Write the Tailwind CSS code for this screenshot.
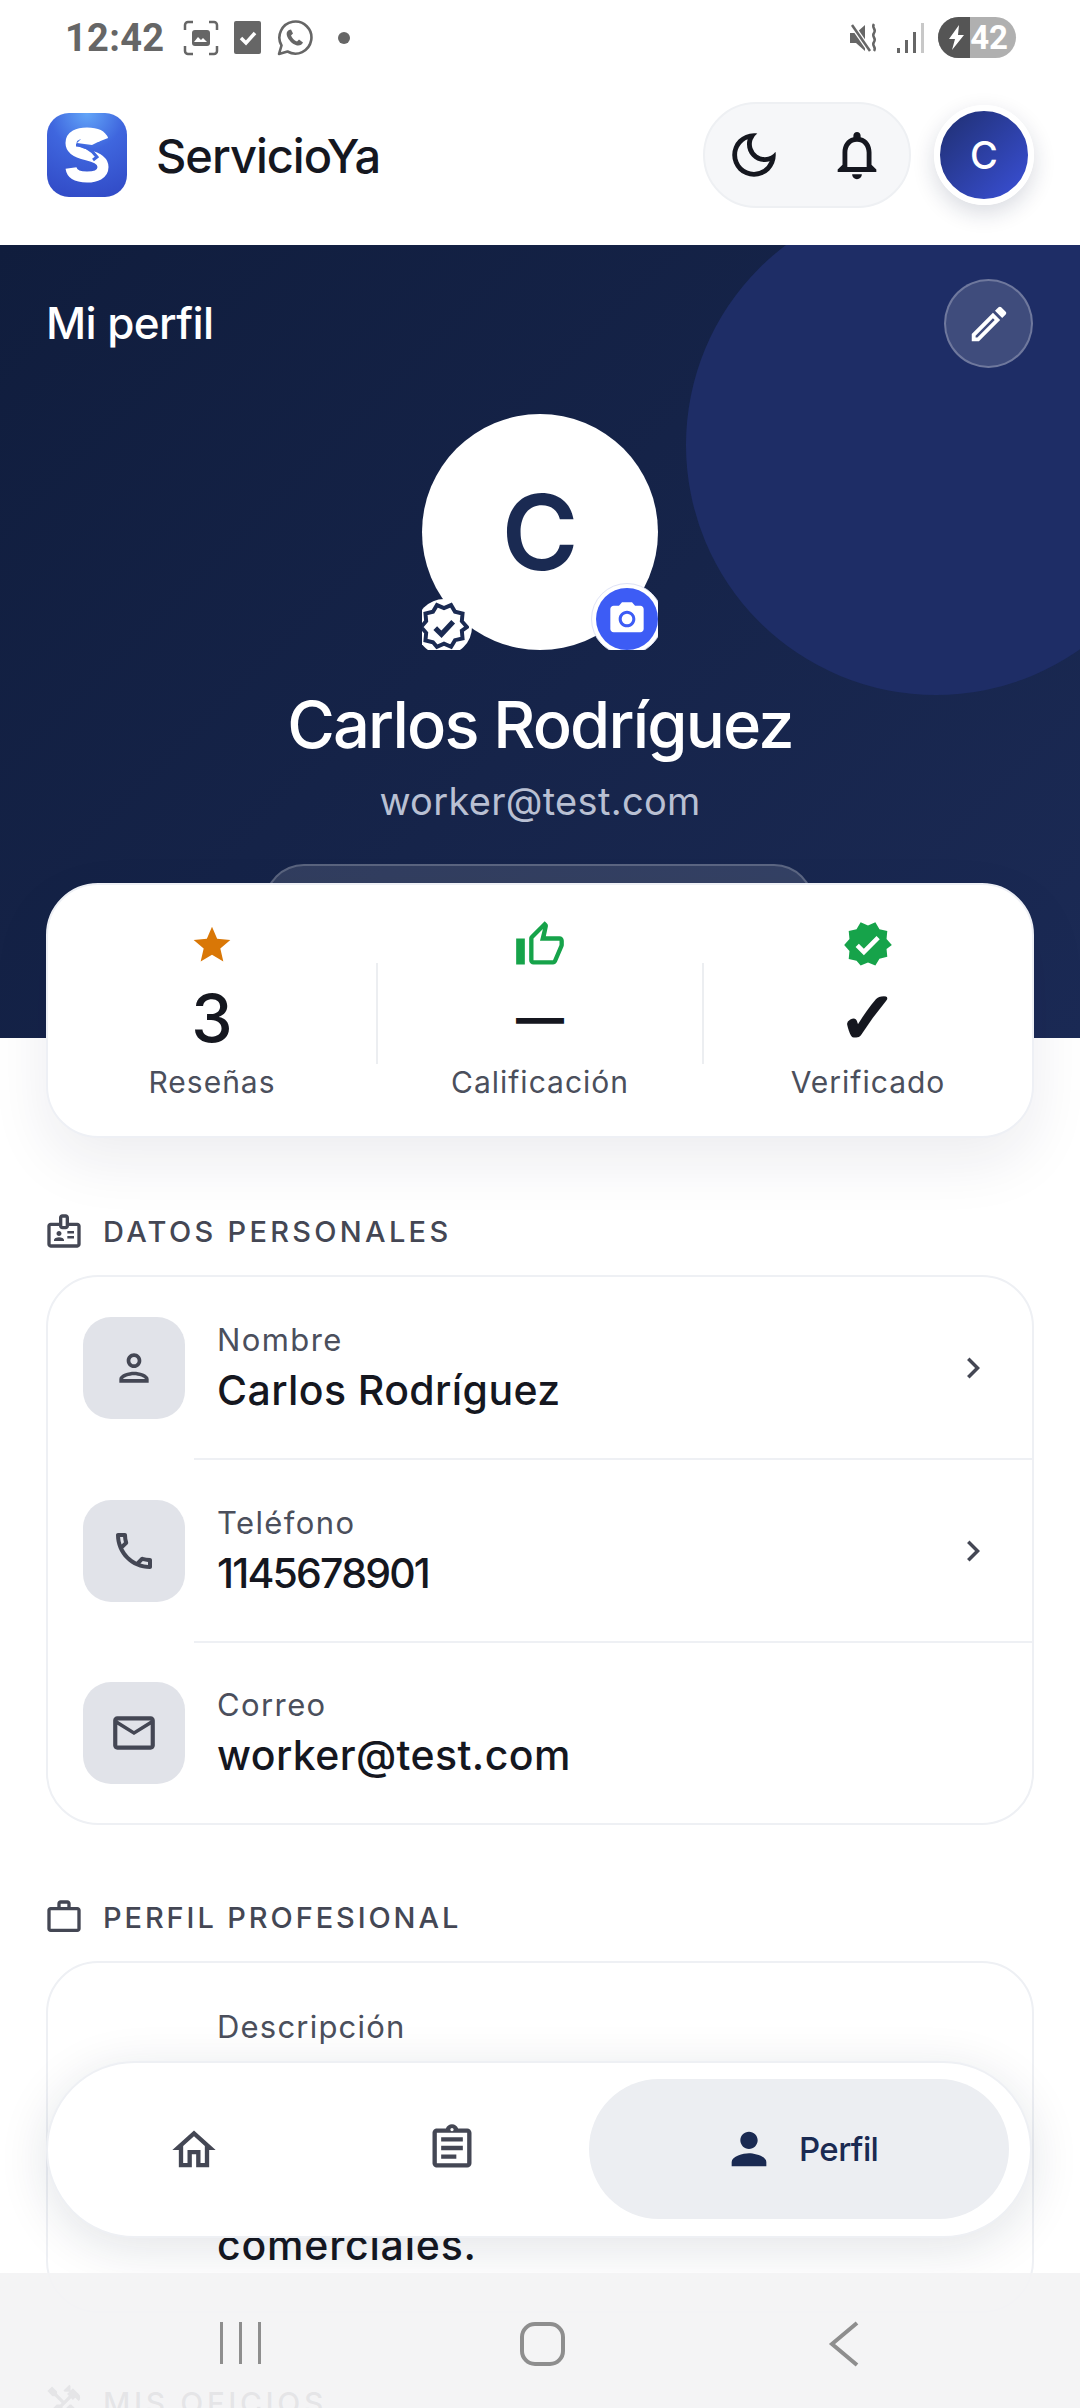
<!DOCTYPE html>
<html lang="es">
<head>
    <meta charset="UTF-8">
    <meta name="viewport" content="width=device-width, initial-scale=1.0">
    <title>ServicioYa - Mi perfil</title>
    <script src="https://cdn.jsdelivr.net/npm/@tailwindcss/browser@4"></script>
</head>
<body class="[font-family:Inter,sans-serif] bg-white">
<div class="relative w-[1080px] h-[2408px] overflow-hidden bg-white">

    <!-- status bar -->
    <div class="h-[75px] flex items-center justify-between pl-[65px] pr-[64px] text-[#666666]">
        <div class="flex items-center">
            <span class="[font-family:Roboto,sans-serif] text-[38px] leading-none font-bold w-[118px] tracking-[0.3px]">12:42</span>
            <svg class="w-[36px] h-[36px]" viewBox="0 0 36 36" fill="none"><path d="M2 10V5a3 3 0 0 1 3-3h5M26 2h5a3 3 0 0 1 3 3v5M34 26v5a3 3 0 0 1-3 3h-5M10 34H5a3 3 0 0 1-3-3v-5" stroke="#666" stroke-width="2.5"/><rect x="9" y="10" width="18" height="16" rx="3" fill="#666"/><path d="M11 22l4-5 3 3 2-2 4 4z" fill="#fff"/></svg>
            <svg class="w-[27px] h-[33px] ml-[15px]" viewBox="0 0 27 33"><rect width="27" height="33" rx="2" fill="#666"/><path d="M7 17l5 5 9-10" stroke="#fff" stroke-width="3.5" fill="none"/></svg>
            <svg class="w-[36px] h-[36px] ml-[16px]" viewBox="0 0 36 36" fill="none"><path d="M2 34l2.5-8.5A16 16 0 1 1 10.5 31.500z" stroke="#666" stroke-width="2.600" stroke-linejoin="round"/><path d="M12 10c-2 1-3 3-2 6 1.500 4 5 8 10 9.500 3 .5 5-1 6-3l-4-3-2 2c-3-1-5-3.500-6-6l2-2-2-4z" fill="#666"/></svg>
            <span class="block w-[12px] h-[12px] rounded-full bg-[#666666] ml-[25px]"></span>
        </div>
        <div class="flex items-center">
            <svg class="w-[34px] h-[30px]" viewBox="0 0 30 30" fill="#666"><path d="M0 10h6l9-8v26l-9-8H0z"/><path d="M2 2l18 26" stroke="#fff" stroke-width="5"/><path d="M2 2l18 26" stroke="#666" stroke-width="2.500"/><path d="M24 1c-3 4 3 5 0 9s3 5 0 9 3 5 0 9" stroke="#666" stroke-width="2.500" fill="none"/></svg>
            <svg class="w-[28px] h-[30px] ml-[15px]" viewBox="0 0 28 30"><rect x="0" y="25" width="3" height="5" fill="#666"/><rect x="8" y="17" width="3" height="13" fill="#666"/><rect x="16" y="9" width="3" height="21" fill="#666"/><rect x="24" y="0" width="3" height="30" fill="#c8c8c8"/></svg>
            <div class="relative w-[78px] h-[41px] rounded-full overflow-hidden ml-[13px] bg-[#b0b0b0] flex items-center justify-end pr-[8px]">
                <span class="absolute left-0 top-0 w-[32px] h-full bg-[#555555]"></span>
                <svg class="absolute left-[11px] top-[8px] w-[16px] h-[25px]" viewBox="0 0 16 25" fill="#fff"><path d="M10 0L0 14h6l-3 11 12-15H9z"/></svg>
                <span class="relative [font-family:Roboto,sans-serif] text-white font-bold text-[33px] leading-none">42</span>
            </div>
        </div>
    </div>

    <!-- app header -->
    <header class="h-[170px] flex items-center pl-[47px] pr-[46px]">
        <div class="w-[80px] h-[84px] rounded-[22px] bg-[radial-gradient(circle_at_50%_0%,#62a5f8_0%,#3f66de_40%,#3048c4_100%)] flex items-center justify-center -mt-[10px]">
            <svg class="w-[44px] h-[56px]" viewBox="0 0 44 56" fill="none">
                <path d="M38 13C36 8 29 6 22 6 13 6 6 9 6 16c0 7 7 10 16 12 9 2 16 5 16 12 0 7-7 10-16 10-8 0-15-2-16-9" stroke="#fff" stroke-width="11"/>
                <path d="M12 16L23 5l6 5 5-2 1 6-8 4z" fill="#fff"/>
                <path d="M11 18c9 0 15 4 21 12l-4 3" stroke="#3f66de" stroke-width="3"/>
            </svg>
        </div>
        <span class="ml-[29px] -mt-[10px] text-[47px] leading-none font-medium text-[#15171f] tracking-[-1px]">ServicioYa</span>
        <div class="ml-auto flex items-center -mt-[10px]">
            <div class="w-[208px] h-[106px] rounded-full bg-[#f6f7f9] border-2 border-[#eef0f3] flex items-center justify-between px-[20px]">
                <svg class="w-[58px] h-[58px]" viewBox="0 0 24 24" fill="#15171f"><path d="M9.370 5.510A7.350 7.350 0 0 0 9.100 7.500c0 4.080 3.320 7.400 7.400 7.400.680 0 1.350-.090 1.990-.270A7.014 7.014 0 0 1 12 19c-3.860 0-7-3.140-7-7 0-2.930 1.810-5.450 4.370-6.490zM12 3a9 9 0 1 0 9 9c0-.460-.040-.920-.100-1.360a5.389 5.389 0 0 1-4.400 2.260 5.403 5.403 0 0 1-3.140-9.800c-.440-.060-.900-.100-1.360-.100z"/></svg>
                <svg class="w-[58px] h-[58px] mr-[3px]" viewBox="0 0 24 24" fill="#15171f"><path d="M12 22c1.100 0 2-.900 2-2h-4c0 1.100.900 2 2 2zm6-6v-5c0-3.070-1.630-5.640-4.500-6.320V4c0-.830-.670-1.500-1.500-1.500s-1.500.670-1.500 1.500v.680C7.640 5.360 6 7.920 6 11v5l-2 2v1h16v-1l-2-2zm-2 1H8v-6c0-2.480 1.510-4.500 4-4.500s4 2.020 4 4.500v6z"/></svg>
            </div>
            <div class="ml-[23px] w-[100px] h-[100px] rounded-full border-[6px] border-white bg-[linear-gradient(135deg,#1f2f70,#3a50d8)] flex items-center justify-center text-white text-[38px] font-medium shadow-[0_8px_22px_rgba(20,30,70,0.16)]">C</div>
        </div>
    </header>

    <!-- hero -->
    <section class="relative h-[793px] overflow-hidden bg-[linear-gradient(135deg,#101d3d,#1b2a55)]">
        <div class="absolute left-[686px] top-[-50px] w-[500px] h-[500px] rounded-full bg-[#1e2d66]"></div>
        <div class="relative flex items-center justify-between pl-[46px] pr-[47px] pt-[34px]">
            <h1 class="text-[44px] leading-[89px] font-medium text-white tracking-[-0.6px]">Mi perfil</h1>
            <button class="w-[89px] h-[89px] rounded-full bg-white/15 border-2 border-white/25 flex items-center justify-center">
                <svg class="w-[46px] h-[46px]" viewBox="0 0 24 24" fill="#fff"><path d="M3 17.250V21h3.750L17.810 9.940l-3.750-3.750L3 17.250zM5.920 19H5v-.920l9.060-9.060.920.920L5.920 19zM20.710 5.630l-2.340-2.340c-.200-.200-.450-.290-.710-.290s-.510.100-.700.290l-1.830 1.830 3.750 3.750 1.830-1.830a.996.996 0 0 0 0-1.410z"/></svg>
            </button>
        </div>
        <div class="relative flex flex-col items-center mt-[46px]">
            <div class="relative w-[236px] h-[236px] overflow-hidden">
                <div class="w-full h-full rounded-full bg-white flex items-center justify-center text-[104px] font-semibold text-[#1a2a52]">C</div>
                <div class="absolute left-[-6px] top-[185px] w-[56px] h-[56px] rounded-full bg-white flex items-center justify-center">
                    <svg class="w-[50px] h-[50px]" viewBox="0 0 24 24" fill="none"><path d="M23 12l-2.440-2.790.340-3.690-3.610-.820-1.890-3.200L12 2.960 8.600 1.500 6.710 4.690 3.100 5.500l.340 3.700L1 12l2.440 2.790-.340 3.700 3.610.820L8.600 21.500l3.400-1.470 3.400 1.460 1.890-3.190 3.610-.820-.340-3.690z" stroke="#1a2a52" stroke-width="1.900"/><path d="M7.800 12.500l3 3 5.600-6" stroke="#1a2a52" stroke-width="2.500"/></svg>
                </div>
                <div class="absolute left-[169px] top-[169px] w-[72px] h-[72px] rounded-full bg-white border border-[#dfe3f5] flex items-center justify-center">
                    <div class="w-[62px] h-[62px] rounded-full bg-[#3d5cf5] flex items-center justify-center">
                        <svg class="w-[40px] h-[40px]" viewBox="0 0 24 24" fill="#fff"><circle cx="12" cy="12" r="3.200"/><path d="M9 2L7.170 4H4c-1.100 0-2 .900-2 2v12c0 1.100.900 2 2 2h16c1.100 0 2-.900 2-2V6c0-1.100-.900-2-2-2h-3.170L15 2H9zm3 15c-2.760 0-5-2.240-5-5s2.240-5 5-5 5 2.240 5 5-2.240 5-5 5z"/></svg>
                    </div>
                </div>
            </div>
            <h2 class="mt-[35px] text-[65px] leading-[80px] font-medium text-white tracking-[-1.8px]">Carlos Rodríguez</h2>
            <p class="mt-[11px] text-[38px] leading-[50px] text-[#b9c0d3] tracking-[0.3px]">worker@test.com</p>
        </div>
        <div class="absolute left-[264px] top-[619px] w-[550px] h-[120px] rounded-[40px] bg-white/12 border-2 border-white/20"></div>
    </section>

    <main class="px-[46px]">
        <!-- stats -->
        <div class="relative -mt-[155px] h-[255px] rounded-[52px] bg-white border-2 border-[#eef0f5] shadow-[0_24px_60px_rgba(20,30,60,0.08)] grid grid-cols-3 pt-[38px]">
            <div class="flex flex-col items-center">
                <svg class="w-[44px] h-[44px]" viewBox="0 0 24 24" fill="#d97706"><path d="M12 17.270L18.180 21l-1.640-7.030L22 9.240l-7.190-.610L12 2 9.190 8.630 2 9.240l5.460 4.730L5.820 21z"/></svg>
                <span class="mt-[16px] text-[66px] leading-[70px] font-medium text-[#15171f]">3</span>
                <span class="mt-[9px] text-[30px] leading-[40px] text-[#4b4f5c] tracking-[1px]">Reseñas</span>
            </div>
            <div class="relative flex flex-col items-center">
                <span class="absolute left-0 top-[40px] w-[2px] h-[101px] bg-[#eceef1]"></span>
                <span class="absolute right-0 top-[40px] w-[2px] h-[101px] bg-[#eceef1]"></span>
                <svg class="w-[52px] h-[52px] -mt-[4px]" viewBox="0 0 24 24" fill="#16a34a"><path d="M9 21h9c.830 0 1.540-.500 1.840-1.220l3.020-7.050c.090-.230.140-.470.140-.730v-2c0-1.100-.900-2-2-2h-6.310l.950-4.570.030-.320c0-.410-.170-.790-.440-1.060L14.170 1 7.580 7.590C7.220 7.950 7 8.450 7 9v10c0 1.100.900 2 2 2zM9 9l4.340-4.340L12 10h9v2l-3 7H9V9zM1 9h4v12H1z"/></svg>
                <span class="mt-[12px] text-[48px] leading-[70px] font-bold text-[#15171f]">—</span>
                <span class="mt-[9px] text-[30px] leading-[40px] text-[#4b4f5c] tracking-[1px]">Calificación</span>
            </div>
            <div class="flex flex-col items-center">
                <svg class="w-[52px] h-[52px] -mt-[4px]" viewBox="0 0 24 24" fill="#16a34a"><path d="M23 12l-2.440-2.790.340-3.690-3.610-.820-1.890-3.200L12 2.960 8.600 1.500 6.710 4.690 3.100 5.500l.340 3.700L1 12l2.440 2.790-.340 3.700 3.610.820L8.600 21.500l3.400-1.470 3.400 1.460 1.890-3.190 3.610-.820-.340-3.690L23 12zm-12.910 4.720l-3.800-3.810 1.480-1.480 2.320 2.330 5.850-5.870 1.480 1.480-7.330 7.350z"/></svg>
                <span class="mt-[12px] [font-family:'DejaVu_Sans',sans-serif] text-[72px] leading-[70px] font-bold text-[#15171f] [-webkit-text-stroke:3px_#15171f]">✓</span>
                <span class="mt-[9px] text-[30px] leading-[40px] text-[#4b4f5c] tracking-[1px]">Verificado</span>
            </div>
        </div>

        <!-- datos personales -->
        <div class="mt-[73px] mb-[24px] h-[40px] flex items-center">
            <svg class="w-[40px] h-[40px] -ml-[2px]" viewBox="0 0 24 24" fill="#444754"><path d="M20 7h-5V4c0-1.100-.900-2-2-2h-2c-1.100 0-2 .900-2 2v3H4c-1.100 0-2 .900-2 2v11c0 1.100.900 2 2 2h16c1.100 0 2-.900 2-2V9c0-1.100-.900-2-2-2zM11 4h2v5h-2V4zm9 16H4V9h5c0 1.100.900 2 2 2h2c1.100 0 2-.900 2-2h5v11z"/><path d="M18 13.500h-4V12h4zm0 3h-4V15h4zM9 15c.830 0 1.500-.670 1.500-1.500S9.830 12 9 12s-1.500.670-1.500 1.500S8.170 15 9 15zm2.080 1.180c-.640-.280-1.340-.430-2.080-.430s-1.440.150-2.080.430C6.360 16.420 6 16.960 6 17.570V18h6v-.43c0-.610-.360-1.150-.920-1.390z"/></svg>
            <span class="ml-[19px] text-[29px] leading-none font-medium text-[#444754] tracking-[3.300px]">DATOS PERSONALES</span>
        </div>
        <div class="rounded-[52px] border-2 border-[#eef0f4] bg-white">
            <div class="h-[181px] flex items-center pl-[35px] pr-[38px]">
                <div class="w-[102px] h-[102px] rounded-[28px] bg-[#e1e3e9] flex items-center justify-center">
                    <svg class="w-[44px] h-[44px]" viewBox="0 0 24 24" fill="#444754"><path d="M12 6c1.100 0 2 .900 2 2s-.900 2-2 2-2-.900-2-2 .900-2 2-2m0 10c2.700 0 5.800 1.290 6 2H6c.230-.720 3.310-2 6-2m0-12C9.790 4 8 5.790 8 8s1.790 4 4 4 4-1.790 4-4-1.790-4-4-4zm0 10c-2.670 0-8 1.340-8 4v2h16v-2c0-2.660-5.330-4-8-4z"/></svg>
                </div>
                <div class="ml-[32px] flex flex-col gap-[4px]">
                    <span class="text-[31px] leading-[40px] text-[#4b4f5c] tracking-[1.4px]">Nombre</span>
                    <span class="text-[41px] leading-[52px] font-medium text-[#15171f] tracking-[0.4px]">Carlos Rodríguez</span>
                </div>
                <svg class="ml-auto w-[42px] h-[42px]" viewBox="0 0 24 24" fill="#444754"><path d="M10 6L8.590 7.410 13.170 12l-4.580 4.590L10 18l6-6z"/></svg>
            </div>
            <div class="ml-[146px] h-[2px] bg-[#eef0f4]"></div>
            <div class="h-[181px] flex items-center pl-[35px] pr-[38px]">
                <div class="w-[102px] h-[102px] rounded-[28px] bg-[#e1e3e9] flex items-center justify-center">
                    <svg class="w-[48px] h-[48px]" viewBox="0 0 24 24" fill="#444754"><path d="M6.540 5c.060.890.210 1.760.450 2.590l-1.200 1.200c-.410-1.200-.670-2.470-.760-3.790h1.510m9.860 12.020c.850.240 1.720.390 2.600.450v1.490c-1.320-.090-2.590-.350-3.800-.750l1.200-1.190M7.500 3H4c-.550 0-1 .450-1 1 0 9.390 7.610 17 17 17 .550 0 1-.450 1-1v-3.490c0-.550-.450-1-1-1-1.240 0-2.450-.200-3.570-.570-.100-.040-.210-.050-.310-.050-.260 0-.510.100-.710.290l-2.200 2.200c-2.830-1.450-5.150-3.760-6.590-6.590l2.200-2.200c.280-.280.360-.670.250-1.020C8.700 6.450 8.500 5.250 8.500 4c0-.550-.450-1-1-1z"/></svg>
                </div>
                <div class="ml-[32px] flex flex-col gap-[4px]">
                    <span class="text-[31px] leading-[40px] text-[#4b4f5c] tracking-[1.4px]">Teléfono</span>
                    <span class="text-[41px] leading-[52px] font-medium text-[#15171f] tracking-[-1.8px]">1145678901</span>
                </div>
                <svg class="ml-auto w-[42px] h-[42px]" viewBox="0 0 24 24" fill="#444754"><path d="M10 6L8.590 7.410 13.170 12l-4.580 4.590L10 18l6-6z"/></svg>
            </div>
            <div class="ml-[146px] h-[2px] bg-[#eef0f4]"></div>
            <div class="h-[180px] flex items-center pl-[35px] pr-[38px]">
                <div class="w-[102px] h-[102px] rounded-[28px] bg-[#e1e3e9] flex items-center justify-center">
                    <svg class="w-[50px] h-[50px]" viewBox="0 0 24 24" fill="#444754"><path d="M22 6c0-1.100-.900-2-2-2H4c-1.100 0-2 .900-2 2v12c0 1.100.900 2 2 2h16c1.100 0 2-.900 2-2V6zm-2 0l-8 5-8-5h16zm0 12H4V8l8 5 8-5v10z"/></svg>
                </div>
                <div class="ml-[32px] flex flex-col gap-[4px]">
                    <span class="text-[31px] leading-[40px] text-[#4b4f5c] tracking-[1.4px]">Correo</span>
                    <span class="text-[41px] leading-[52px] font-medium text-[#15171f] tracking-[0.4px]">worker@test.com</span>
                </div>
            </div>
        </div>

        <!-- perfil profesional -->
        <div class="mt-[72px] mb-[24px] h-[40px] flex items-center">
            <svg class="w-[40px] h-[40px] -ml-[2px]" viewBox="0 0 24 24" fill="#444754"><path d="M14 6V4h-4v2h4zM4 8v11h16V8H4zm16-2c1.110 0 2 .890 2 2v11c0 1.110-.890 2-2 2H4c-1.110 0-2-.890-2-2l.010-11c0-1.110.880-2 1.990-2h4V4c0-1.110.890-2 2-2h4c1.110 0 2 .890 2 2v2h4z"/></svg>
            <span class="ml-[19px] text-[29px] leading-none font-medium text-[#444754] tracking-[2.900px]">PERFIL PROFESIONAL</span>
        </div>
        <div class="rounded-[52px] border-2 border-[#eef0f4] bg-white h-[352px] pl-[169px] pt-[44px]">
            <span class="block text-[31px] leading-[40px] text-[#4b4f5c] tracking-[1.2px]">Descripción</span>
            <div class="h-[172px]"></div>
            <span class="block text-[41px] leading-[52px] font-medium text-[#15171f] tracking-[0.8px]">comerciales.</span>
        </div>

        <!-- mis oficios -->
        <div class="mt-[70px] h-[40px] flex items-center">
            <svg class="w-[40px] h-[40px] -ml-[2px]" viewBox="0 0 24 24" fill="#444754"><path d="M21.670 18.170l-5.300-5.300h-.990l-2.540 2.540v.990l5.300 5.300c.390.390 1.020.390 1.410 0l2.120-2.120c.390-.380.390-1.020 0-1.410zM17.340 10.190l1.410-1.410 2.120 2.120a3 3 0 0 0 0-4.240l-3.540-3.540-1.410 1.410V1.710l-.700-.710-3.540 3.540.710.710h2.830l-1.410 1.410 1.060 1.060-2.890 2.890-4.130-4.130V5.060L4.830 2.040 2 4.870 5.030 7.900h1.410l4.130 4.130-.850.850H7.600l-5.300 5.300c-.390.390-.390 1.020 0 1.410l2.120 2.120c.390.390 1.020.390 1.410 0l5.300-5.300v-2.120l5.150-5.150 1.060 1.050z"/></svg>
            <span class="ml-[19px] text-[30px] leading-none font-medium text-[#444754] tracking-[3.600px]">MIS OFICIOS</span>
        </div>
    </main>

    <!-- floating nav -->
    <nav class="absolute left-[46px] top-[2061px] w-[986px] h-[177px] rounded-full bg-white border-2 border-[#eef0f4] shadow-[0_10px_50px_rgba(20,30,60,0.12)] flex items-center">
        <svg class="absolute left-[120px] top-[61px] w-[52px] h-[52px]" viewBox="0 0 24 24" fill="#444754"><path d="M12 5.690l5 4.500V18h-2v-6H9v6H7v-7.810l5-4.500M12 3L2 12h3v8h6v-6h2v6h6v-8h3L12 3z"/></svg>
        <svg class="absolute left-[378px] top-[59px] w-[52px] h-[52px]" viewBox="0 0 24 24" fill="#444754"><path d="M7 15h7v2H7zm0-4h10v2H7zm0-4h10v2H7zm12-4h-4.180C14.400 1.840 13.300 1 12 1c-1.300 0-2.400.840-2.820 2H5c-.140 0-.270.010-.400.040-.390.080-.740.280-1.010.550-.180.180-.330.400-.430.640-.100.230-.160.490-.160.770v14c0 .270.060.540.160.780s.250.450.430.640c.270.270.620.470 1.010.550.130.020.260.030.400.030h14c1.100 0 2-.900 2-2V5c0-1.100-.900-2-2-2zm-7-.250c.410 0 .750.340.750.750s-.340.750-.750.750-.750-.340-.750-.750.340-.750.750-.750zM19 19H5V5h14v14z"/></svg>
        <div class="absolute left-[541px] top-[16px] w-[420px] h-[140px] rounded-full bg-[#eceef2] flex items-center">
            <svg class="ml-[134px] w-[52px] h-[52px]" viewBox="0 0 24 24" fill="#1a2a52"><path d="M12 12c2.210 0 4-1.790 4-4s-1.790-4-4-4-4 1.790-4 4 1.790 4 4 4zm0 2c-2.670 0-8 1.340-8 4v2h16v-2c0-2.660-5.330-4-8-4z"/></svg>
            <span class="ml-[24px] text-[33px] leading-none font-medium text-[#1a2a52] tracking-[-0.6px]">Perfil</span>
        </div>
    </nav>

    <!-- system nav bar -->
    <div class="absolute left-0 top-[2273px] w-[1080px] h-[135px] bg-[#f3f3f4]/92">
        <div class="absolute left-[220px] top-[49px] flex gap-[16px]">
            <span class="block w-[3px] h-[42px] bg-[#8e8e8e]"></span>
            <span class="block w-[3px] h-[42px] bg-[#8e8e8e]"></span>
            <span class="block w-[3px] h-[42px] bg-[#8e8e8e]"></span>
        </div>
        <span class="absolute left-[520px] top-[49px] block w-[45px] h-[44px] rounded-[15px] border-[4px] border-[#8e8e8e]"></span>
        <svg class="absolute left-[828px] top-[47px] w-[32px] h-[48px]" viewBox="0 0 32 48" fill="none"><path d="M29 3L4 24l25 21" stroke="#8e8e8e" stroke-width="4"/></svg>
    </div>
</div>
</body>
</html>
